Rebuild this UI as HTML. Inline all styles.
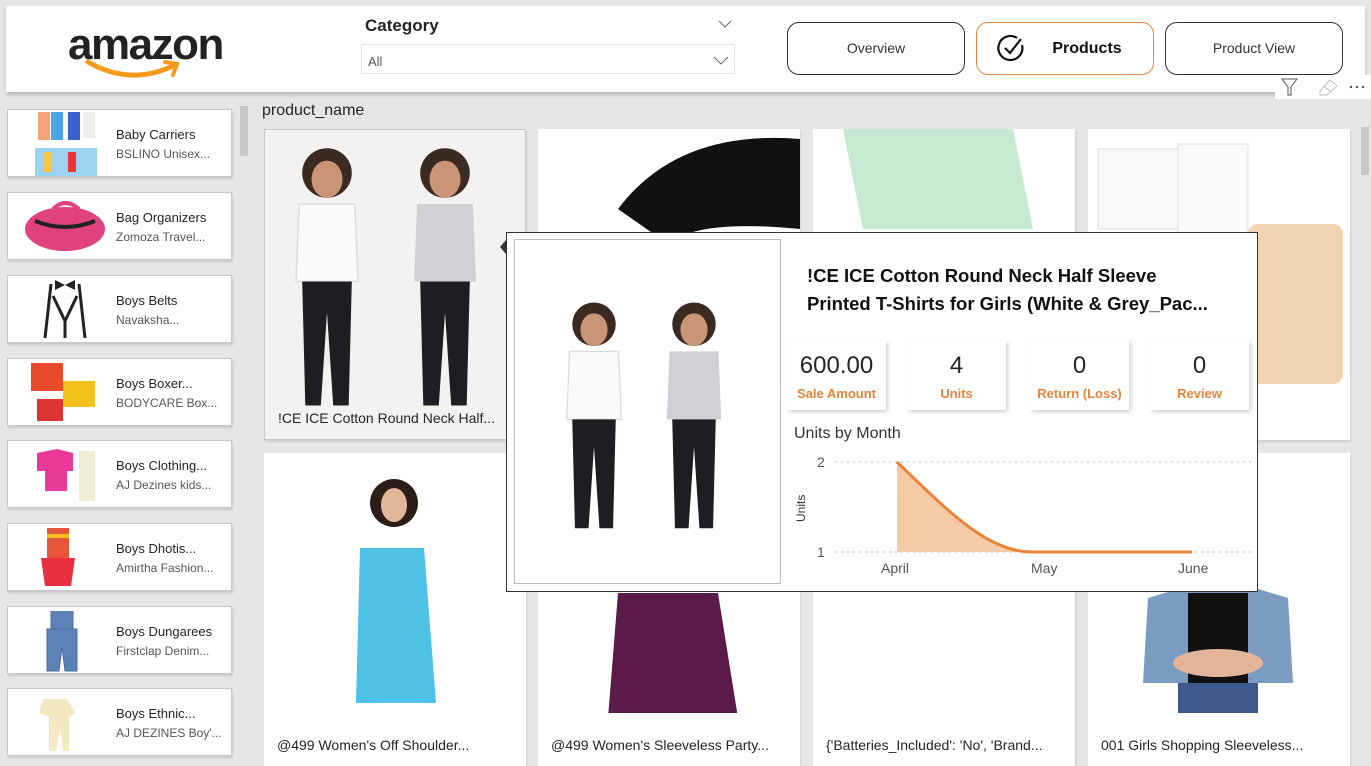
<!DOCTYPE html>
<html><head><meta charset="utf-8"><style>
*{margin:0;padding:0;box-sizing:border-box}
body{width:1371px;height:766px;overflow:hidden;background:#e6e6e6;font-family:"Liberation Sans",sans-serif;position:relative;color:#252423}
.abs{position:absolute}
.hdr{left:6px;top:6px;width:1359px;height:86px;background:#fff;box-shadow:0 3px 4px rgba(0,0,0,.18)}
.btn{position:absolute;top:22px;height:53px;width:178px;border:1px solid #333;border-radius:12px;font-size:14px;text-align:center;line-height:51px;background:#fff;color:#333}
.lc{position:absolute;left:7px;width:225px;height:68px;background:#fff;border:1px solid #c8c8c8;box-shadow:1px 2px 2px rgba(0,0,0,.12)}
.lc .t{position:absolute;left:108px;top:17px;font-size:13px;color:#252423}
.lc .s{position:absolute;left:108px;top:37px;font-size:12px;color:#555}
.lc svg{position:absolute;left:15px;top:0}
.gc{position:absolute;width:262px;background:#fff;box-shadow:1px 2px 2px rgba(0,0,0,.1);overflow:hidden}
.gc .lb{position:absolute;left:13px;bottom:13px;font-size:14px;color:#252423;white-space:nowrap}
.kpi{position:absolute;top:340px;width:99px;height:70px;background:#fff;box-shadow:2px 2px 4px rgba(0,0,0,.18);text-align:center}
.kpi .v{font-size:24px;margin-top:12px;color:#252423}
.kpi .l{font-size:13px;font-weight:bold;color:#e8843a;margin-top:6px}
</style></head><body>
<div class="abs hdr"></div>
<div class="abs" style="left:68px;top:20px;font-size:44px;font-weight:bold;color:#222;letter-spacing:-1.5px">amazon</div>
<svg class="abs" style="left:85px;top:58px" width="100" height="26"><path d="M3 4 Q45 28 88 8" stroke="#f79a1c" stroke-width="5" fill="none" stroke-linecap="round"/><path d="M80 4 L92 6 L88 17" stroke="#f79a1c" stroke-width="4" fill="none" stroke-linecap="round"/></svg>
<div class="abs" style="left:365px;top:16px;font-size:17px;font-weight:bold">Category</div>
<svg class="abs" style="left:718px;top:19px" width="14" height="10"><path d="M1 2 L7 8 L13 2" stroke="#666" fill="none"/></svg>
<div class="abs" style="left:361px;top:44px;width:374px;height:30px;border:1px solid #e3e3e3;background:#fff"></div>
<div class="abs" style="left:368px;top:54px;font-size:13px;color:#555">All</div>
<svg class="abs" style="left:713px;top:56px" width="16" height="10"><path d="M1 1 L8 8 L15 1" stroke="#666" fill="none"/></svg>
<div class="btn" style="left:787px">Overview</div>
<div class="btn" style="left:976px;border-color:#e8843a;font-weight:bold;font-size:16px;color:#111;padding-left:44px">Products</div>
<svg class="abs" style="left:995px;top:32px" width="32" height="32"><path d="M22 6 A12 12 0 1 0 27 13" stroke="#111" stroke-width="2.2" fill="none"/><path d="M10 16 L15 21 L26 7" stroke="#111" stroke-width="2.2" fill="none"/></svg>
<div class="btn" style="left:1165px">Product View</div>
<div class="abs" style="left:1275px;top:75px;width:96px;height:24px;background:#fff"></div>
<svg class="abs" style="left:1280px;top:77px" width="90" height="20"><path d="M2 2 H17 L11 10 V18 H8 V10 Z" stroke="#555" fill="none"/><path d="M40 14 L50 3 L57 9 L47 18 H40 Z M44 9 L51 15" stroke="#bbb" fill="none"/><circle cx="71" cy="10" r="1.2" fill="#555"/><circle cx="77" cy="10" r="1.2" fill="#555"/><circle cx="83" cy="10" r="1.2" fill="#555"/></svg>

<div class="abs" style="left:240px;top:106px;width:8px;height:50px;background:#c8c8c8"></div>
<div class="lc" style="top:109px"><svg width="80" height="68"><rect x="15" y="2" width="12" height="28" fill="#f2a37a"/><rect x="28" y="2" width="12" height="28" fill="#4aa6e8"/><rect x="45" y="2" width="12" height="28" fill="#3a5fd0"/><rect x="60" y="2" width="12" height="26" fill="#eee"/><rect x="12" y="38" width="62" height="28" fill="#9cd3f0"/><rect x="20" y="42" width="8" height="20" fill="#f5c542"/><rect x="45" y="42" width="8" height="20" fill="#e33"/></svg><div class="t">Baby Carriers</div><div class="s">BSLINO Unisex...</div></div>
<div class="lc" style="top:192px"><svg width="90" height="68"><ellipse cx="42" cy="36" rx="40" ry="22" fill="#e0417f"/><path d="M12 28 Q42 40 72 28" stroke="#222" stroke-width="4" fill="none"/><path d="M30 16 Q42 4 56 16" stroke="#e0417f" stroke-width="4" fill="none"/></svg><div class="t">Bag Organizers</div><div class="s">Zomoza Travel...</div></div>
<div class="lc" style="top:275px"><svg width="80" height="68"><path d="M28 8 L22 62 M56 8 L62 62 M30 20 L42 45 L54 20 M42 45 V62" stroke="#222" stroke-width="3" fill="none"/><path d="M32 4 L42 9 L52 4 L52 14 L42 9 L32 14Z" fill="#222"/></svg><div class="t">Boys Belts</div><div class="s">Navaksha...</div></div>
<div class="lc" style="top:358px"><svg width="80" height="68"><rect x="8" y="4" width="32" height="28" fill="#e84a2a"/><rect x="40" y="22" width="32" height="26" fill="#f3c21c"/><rect x="14" y="40" width="26" height="22" fill="#d33"/></svg><div class="t">Boys Boxer...</div><div class="s">BODYCARE Box...</div></div>
<div class="lc" style="top:440px"><svg width="80" height="68"><path d="M14 12 L34 8 L50 12 L50 30 L44 30 L44 50 L22 50 L22 30 L14 30Z" fill="#e8389a"/><rect x="56" y="10" width="16" height="50" fill="#f1ecd6"/></svg><div class="t">Boys Clothing...</div><div class="s">AJ Dezines kids...</div></div>
<div class="lc" style="top:523px"><svg width="80" height="68"><rect x="24" y="4" width="22" height="30" fill="#e8553a"/><rect x="24" y="10" width="22" height="4" fill="#f3c21c"/><path d="M18 34 H52 L48 62 H22Z" fill="#e83040"/></svg><div class="t">Boys Dhotis...</div><div class="s">Amirtha Fashion...</div></div>
<div class="lc" style="top:606px"><svg width="80" height="68"><path d="M28 4 V22 H50 V4 M24 22 H54 L54 64 H42 L39 40 L36 64 H24Z" fill="#5d82b8" stroke="#4a6d9e"/></svg><div class="t">Boys Dungarees</div><div class="s">Firstclap Denim...</div></div>
<div class="lc" style="top:688px"><svg width="80" height="68"><path d="M20 10 L44 10 L52 24 L46 28 L46 62 L40 62 L37 40 L33 62 L26 62 L26 28 L16 24Z" fill="#f4e8c0"/></svg><div class="t">Boys Ethnic...</div><div class="s">AJ DEZINES Boy'...</div></div>

<div class="abs" style="left:262px;top:102px;font-size:16px">product_name</div>
<div class="abs" style="left:1361px;top:127px;width:8px;height:48px;background:#c8c8c8"></div>

<svg width="0" height="0" style="position:absolute"><defs>
<g id="girls"><circle cx="0" cy="20" r="16" fill="#3a2a22"/><ellipse cx="0" cy="24" rx="10" ry="12" fill="#c99576"/><path d="M-18 40 H18 L20 90 H-20Z" fill="#fafafa" stroke="#ddd"/><path d="M-16 90 H16 L14 170 H4 L0 110 L-4 170 H-14Z" fill="#1e1e22"/></g>
<g id="girls2"><circle cx="0" cy="20" r="16" fill="#3a2a22"/><ellipse cx="0" cy="24" rx="10" ry="12" fill="#c99576"/><path d="M-18 40 H18 L20 90 H-20Z" fill="#cfd0d4"/><path d="M-16 90 H16 L14 170 H4 L0 110 L-4 170 H-14Z" fill="#1e1e22"/></g>
</defs></svg>
<div class="gc" style="left:264px;top:129px;height:311px;background:#f3f2f1;border:1px solid #c8c8c8">
<svg width="262" height="280" style="position:absolute;left:0;top:0"><use href="#girls" transform="translate(62,12) scale(1.55)"/><use href="#girls2" transform="translate(180,12) scale(1.55)"/></svg>
<div class="lb">!CE ICE Cotton Round Neck Half...</div></div>
<div class="gc" style="left:538px;top:129px;height:311px"><svg width="262" height="120"><path d="M80 80 Q140 0 262 10 L262 100 Q160 90 130 115Z" fill="#111"/></svg></div>
<div class="gc" style="left:813px;top:129px;height:311px"><svg width="262" height="120"><path d="M30 0 L200 0 L220 100 L50 100Z" fill="#c6eacf"/></svg></div>
<div class="gc" style="left:1088px;top:129px;height:311px"><svg width="262" height="260"><rect x="10" y="20" width="80" height="80" fill="#f8f8f8" stroke="#ddd"/><rect x="90" y="15" width="70" height="90" fill="#fafafa" stroke="#ddd"/><rect x="160" y="95" width="95" height="160" rx="10" fill="#f2d3b3"/></svg><div class="lb">2hook Br...</div></div>
<div class="gc" style="left:264px;top:453px;height:313px"><svg width="262" height="260"><circle cx="130" cy="50" r="24" fill="#2b1d18"/><ellipse cx="130" cy="52" rx="13" ry="17" fill="#e2b69a"/><path d="M96 95 L160 95 L172 250 L92 250Z" fill="#4ec1e6"/></svg><div class="lb">@499 Women's Off Shoulder...</div></div>
<div class="gc" style="left:538px;top:453px;height:313px"><svg width="262" height="260"><path d="M80 140 L180 140 L200 265 L70 265Z" fill="#5a1b4a"/></svg><div class="lb">@499 Women's Sleeveless Party...</div></div>
<div class="gc" style="left:813px;top:453px;height:313px"><div class="lb">{'Batteries_Included': 'No', 'Brand...</div></div>
<div class="gc" style="left:1088px;top:453px;height:313px"><svg width="262" height="260"><path d="M60 145 L110 130 L150 130 L200 145 L205 230 L55 230Z" fill="#7a9cc0"/><rect x="100" y="140" width="60" height="100" fill="#111"/><rect x="90" y="230" width="80" height="40" fill="#3d5a8c"/><ellipse cx="130" cy="210" rx="45" ry="14" fill="#e3b39a"/></svg><div class="lb">001 Girls Shopping Sleeveless...</div></div>

<svg class="abs" style="left:498px;top:238px" width="10" height="18"><path d="M8 2 L2 9 L8 16Z" fill="#333"/></svg>
<div class="abs" style="left:506px;top:232px;width:752px;height:360px;background:#fff;border:1px solid #333"></div>
<div class="abs" style="left:514px;top:239px;width:267px;height:345px;border:1px solid #bbb;background:#fff"></div>
<svg class="abs" style="left:514px;top:239px" width="267" height="345"><use href="#girls" transform="translate(80,58) scale(1.36)"/><use href="#girls2" transform="translate(180,58) scale(1.36)"/></svg>
<div class="abs" style="left:807px;top:262px;font-size:18.5px;font-weight:bold;line-height:28px;color:#111">!CE ICE Cotton Round Neck Half Sleeve<br>Printed T-Shirts for Girls (White &amp; Grey_Pac...</div>
<div class="kpi" style="left:787px"><div class="v">600.00</div><div class="l">Sale Amount</div></div>
<div class="kpi" style="left:907px"><div class="v">4</div><div class="l">Units</div></div>
<div class="kpi" style="left:1030px"><div class="v">0</div><div class="l">Return (Loss)</div></div>
<div class="kpi" style="left:1150px"><div class="v">0</div><div class="l">Review</div></div>
<div class="abs" style="left:794px;top:425px;font-size:16px;color:#333">Units by Month</div>
<svg class="abs" style="left:787px;top:450px" width="470" height="135">
<line x1="48" y1="12" x2="466" y2="12" stroke="#bbb" stroke-dasharray="2 4"/>
<line x1="48" y1="102" x2="466" y2="102" stroke="#bbb" stroke-dasharray="2 4"/>
<path d="M110 12 C160 60 200 102 245 102 L405 102 L405 102 L110 102Z" fill="#f5caa6"/>
<path d="M110 12 C160 60 200 102 245 102 L405 102" stroke="#e8843a" stroke-width="3" fill="none"/>
<text x="30" y="17" font-size="14" fill="#555" font-family="Liberation Sans">2</text>
<text x="30" y="107" font-size="14" fill="#555" font-family="Liberation Sans">1</text>
<text x="94" y="123" font-size="14" fill="#555" font-family="Liberation Sans">April</text>
<text x="244" y="123" font-size="14" fill="#555" font-family="Liberation Sans">May</text>
<text x="391" y="123" font-size="14" fill="#555" font-family="Liberation Sans">June</text>
<text transform="translate(18,72) rotate(-90)" font-size="12" fill="#333" font-family="Liberation Sans">Units</text>
</svg>
</body></html>
